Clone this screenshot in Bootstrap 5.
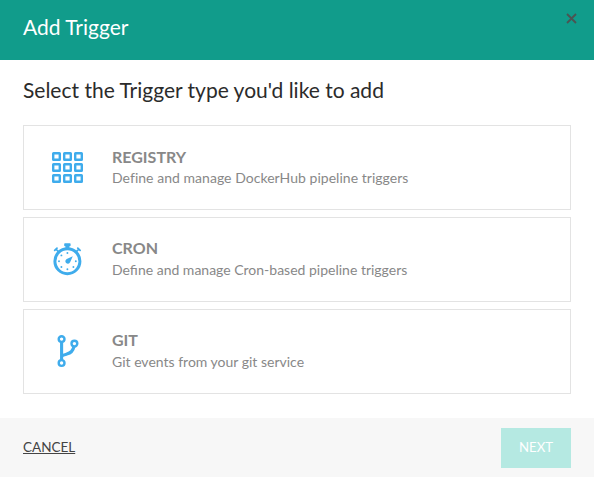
<!DOCTYPE html>
<html lang="en">
<head>
<meta charset="utf-8">
<title>Add Trigger</title>
<link href="https://cdn.jsdelivr.net/npm/bootstrap@5.3.0/dist/css/bootstrap.min.css" rel="stylesheet">
<script src="https://cdn.jsdelivr.net/npm/bootstrap@5.3.0/dist/js/bootstrap.bundle.min.js" defer></script>
<style>
body{font-family:Lato,sans-serif;width:594px;height:477px;overflow:hidden}
.top-bar{background:#119c8b;height:60px;padding:0 23px 6px}
.top-bar h1{font-size:21px;font-weight:400;line-height:26px}
.close-x{position:absolute;left:566px;top:13px;width:11px;height:11px}
.dialog-main{padding:17px 23px 0}
.prompt{font-size:21px;font-weight:400;line-height:26px;color:#2b2b2b;margin:0 0 22px}
.choices{gap:7px}
.choice{height:85px;border:1px solid #e3e3e3;color:#888;padding-left:28px}
.choice svg{width:32px;height:33px;margin-right:28px;color:#3facec}
.choice h3{font-size:16px;line-height:20px;font-weight:700;margin:0 0 1px}
.choice p{font-size:14px;line-height:20px;letter-spacing:.035px}
.choice + .choice h3{margin:-1px 0 2px}
.choice + .choice p{letter-spacing:0}
.actions{height:59px;background:#f7f7f7;padding:0 23px}
.cancel-link{font-size:13.5px;color:#444}
.btn-next,.btn-next:disabled{width:70px;height:40px;font-size:13.2px;color:#fff;background:#b5e9e2;opacity:1}
</style>
</head>
<body class="d-flex flex-column bg-white">
<header class="top-bar d-flex align-items-center text-white">
<h1 class="mb-0">Add Trigger</h1>
<svg class="close-x" viewBox="0 0 11 11"><path d="M1 1l9 9M10 1l-9 9" stroke="#4b5452" stroke-width="1.8"/></svg>
</header>
<main class="dialog-main flex-grow-1">
<h2 class="prompt">Select the Trigger type you'd like to add</h2>
<div class="choices d-flex flex-column">
<div class="choice d-flex align-items-center">
<svg viewBox="0 0 32 33" fill="none" stroke="currentColor" stroke-width="2.4">
<g id="cells"><rect x="1.200" y="2.200" width="6.600" height="6.600" rx=".3"/><rect x="12.200" y="2.200" width="6.600" height="6.600" rx=".3"/><rect x="23.200" y="2.200" width="6.600" height="6.600" rx=".3"/></g>
<use href="#cells" y="11"/><use href="#cells" y="22"/>
</svg>
<div><h3>REGISTRY</h3><p class="mb-0">Define and manage DockerHub pipeline triggers</p></div>
</div>
<div class="choice d-flex align-items-center">
<svg viewBox="0 0 32 33" fill="currentColor">
<circle cx="15.4" cy="18.2" r="12.5" fill="none" stroke="currentColor" stroke-width="3"/>
<path d="M12.200 1q0-.8.8-.8h4.800q.8 0 .8.8v1.400q0 .8-.8.8H17.400v3h-4V3.200h-.4q-.8 0-.8-.8z"/>
<path d="M2.700 7.300l2.300-2.200M25.800 5.100l2.300 2.200M5 7.200l1 1M25.800 7.200l-1 1" stroke="currentColor" stroke-width="1.8" stroke-linecap="round"/>
<path d="M20.800 13.200l-2.700 6q-1.700 2.500-4 .900-1.800-2.200.6-4z"/>
<g><circle cx="15.4" cy="10" r=".95"/><circle cx="9.4" cy="12.4" r=".95"/><circle cx="7" cy="18.2" r=".95"/><circle cx="9.4" cy="24" r=".95"/><circle cx="15.4" cy="26.3" r=".95"/><circle cx="21.4" cy="24" r=".95"/><circle cx="23.8" cy="18.2" r=".95"/></g>
</svg>
<div><h3>CRON</h3><p class="mb-0">Define and manage Cron-based pipeline triggers</p></div>
</div>
<div class="choice d-flex align-items-center">
<svg viewBox="0 0 32 33" fill="none" stroke="currentColor">
<g stroke-width="2.4"><circle cx="9.6" cy="4.100" r="2.900"/><circle cx="22.4" cy="8.600" r="2.900"/><circle cx="9.6" cy="28" r="2.900"/></g>
<path d="M9.6 7v18M9.6 21.2c1-1 3-1.500 5.200-2.100Q20.800 17.400 21.900 11.600" stroke-width="3.100"/>
</svg>
<div><h3>GIT</h3><p class="mb-0">Git events from your git service</p></div>
</div>
</div>
</main>
<footer class="actions d-flex align-items-center justify-content-between">
<a class="cancel-link" href="#">CANCEL</a>
<button class="btn btn-next rounded-0 border-0 p-0" disabled>NEXT</button>
</footer>
</body>
</html>
